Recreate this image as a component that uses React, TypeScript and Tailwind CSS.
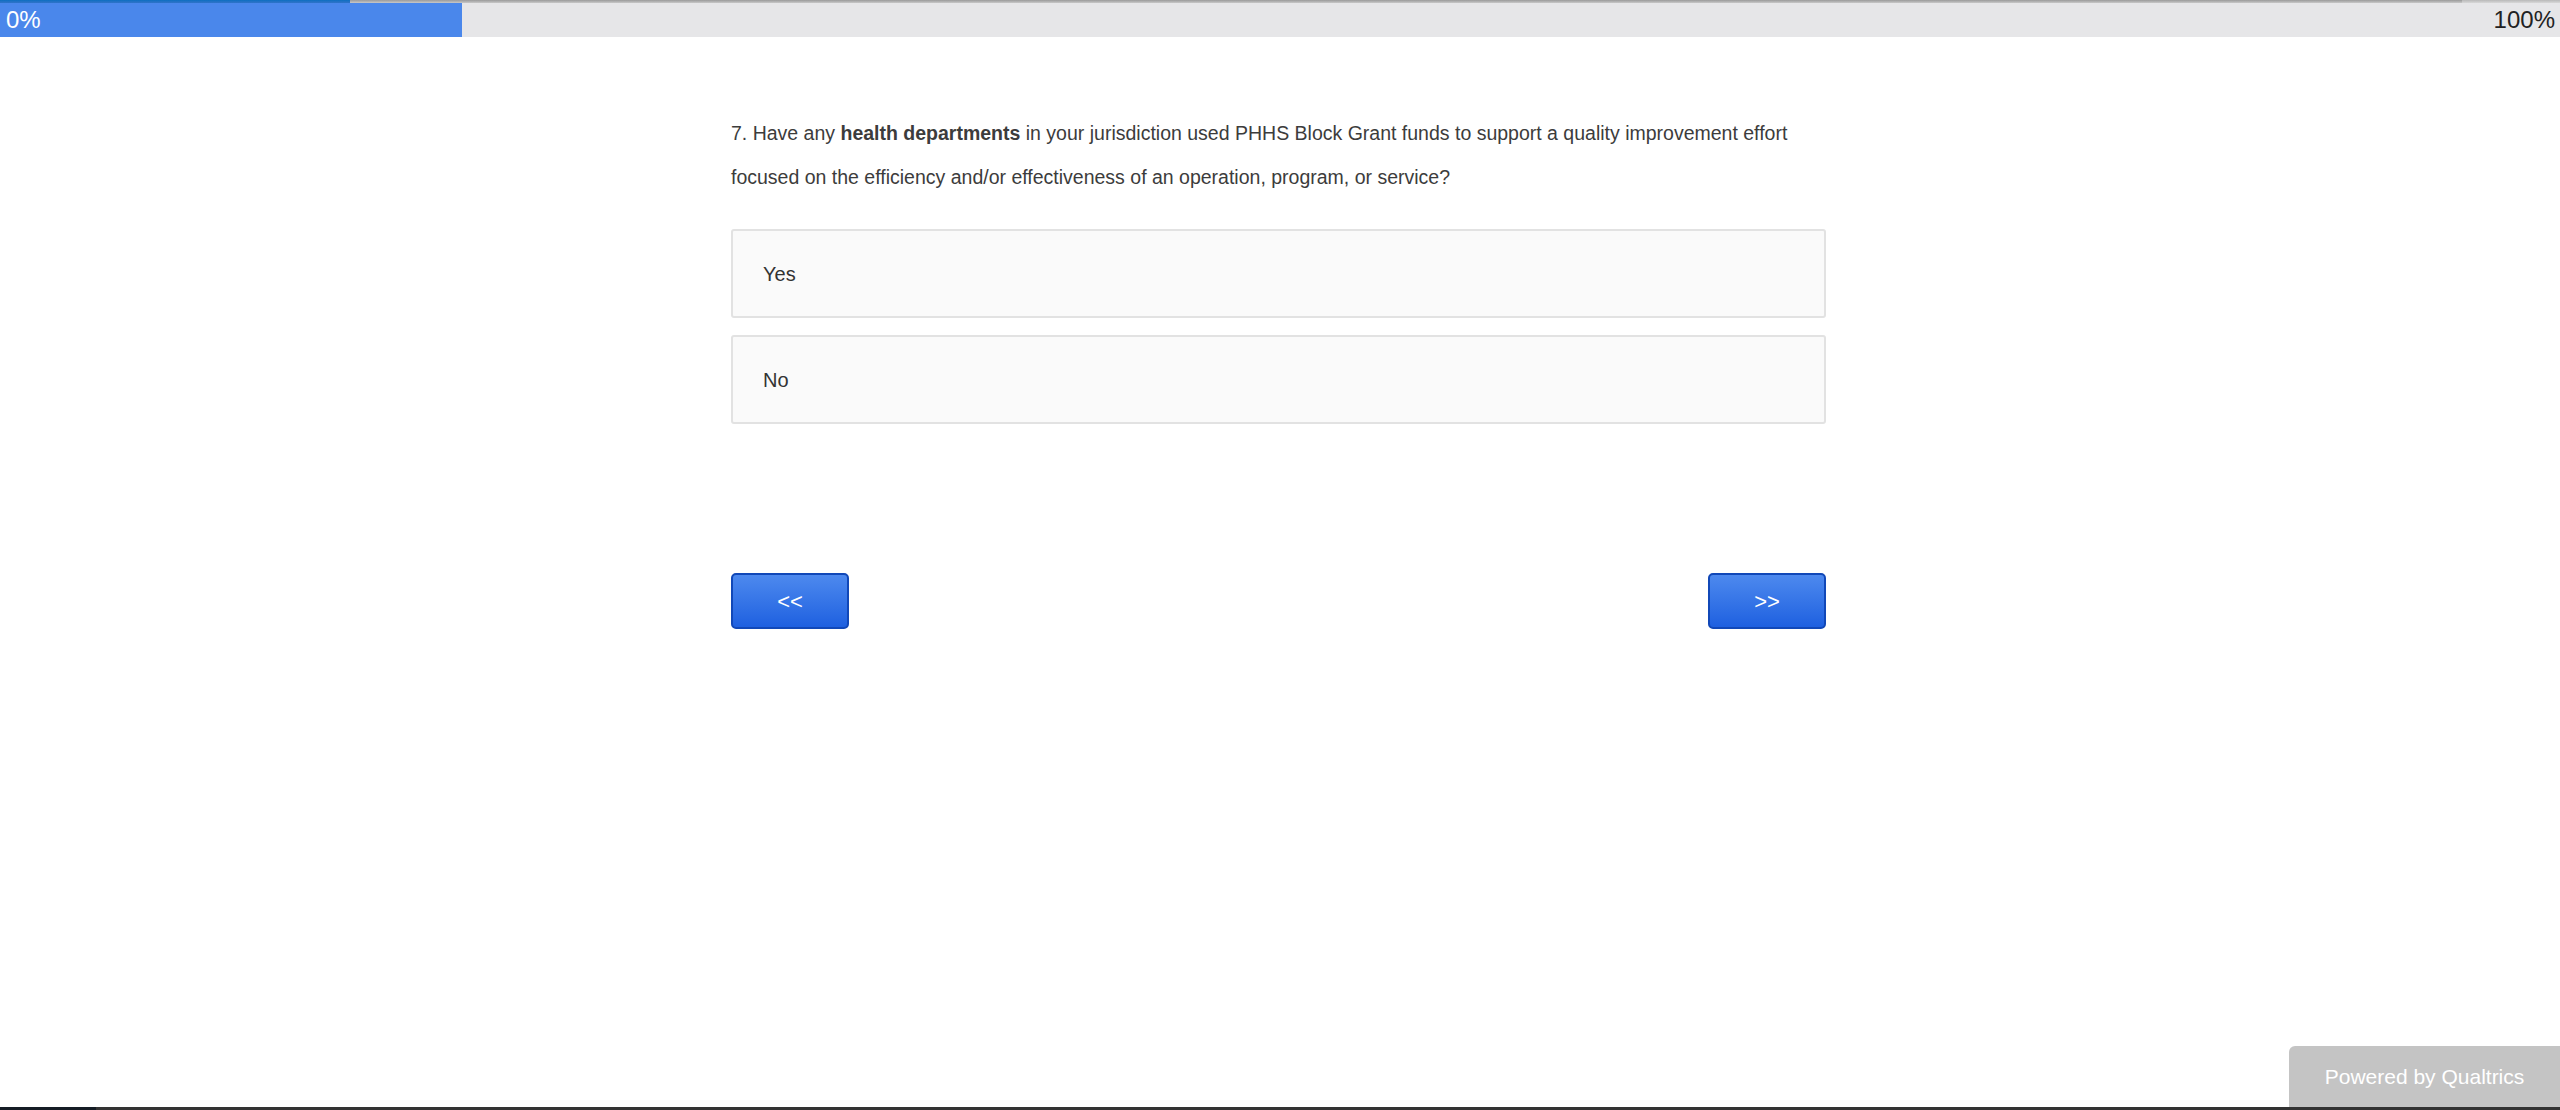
import React from "react";

export default function App() {
  return (
    <div className="relative flex h-[1110px] w-full flex-col overflow-hidden bg-white font-['Liberation_Sans',Arial,sans-serif]">
      {/* top strip */}
      <div className="flex h-[3px] w-full">
        <div className="h-full w-[350px] bg-gradient-to-b from-[#0a6fc0] to-[#2f73c9]" />
        <div className="h-full w-[2112px] bg-gradient-to-b from-[#9a9a9a] to-[#c8c8c8]" />
        <div className="h-full flex-1 bg-gradient-to-b from-[#b8b8b8] to-[#d8d8d8]" />
      </div>
      {/* progress bar */}
      <div className="relative flex h-[34px] w-full bg-[#e6e6e8]">
        <div className="h-full w-[462px] bg-[#4a87eb]" />
        <span className="absolute left-[6px] top-0 text-[24px] leading-[34px] text-white">0%</span>
        <span className="absolute right-[5px] top-0 text-[24px] leading-[34px] text-[#222]">100%</span>
      </div>

      {/* content */}
      <div className="flex justify-center pr-[3px]">
        <div className="flex w-[1095px] flex-col pt-[74px]">
          <div className="text-[19.5px] leading-[44px] text-[#3c3c3c]">
            7. Have any <b className="font-bold">health departments</b> in your jurisdiction used PHHS Block Grant funds to support a quality improvement effort focused on the efficiency and/or effectiveness of an operation, program, or service?
          </div>

          <div className="mt-[30px] flex flex-col gap-[17px]">
            {["Yes", "No"].map((t) => (
              <div
                key={t}
                className="flex h-[89px] items-center rounded-[3px] border-2 border-[#e2e2e2] bg-[#fafafa] pl-[30px] text-[20px] text-[#333]"
              >
                {t}
              </div>
            ))}
          </div>

          <div className="mt-[149px] flex justify-between">
            <button className="flex h-[56px] w-[118px] items-center justify-center rounded-[5px] border-2 border-[#1148b8] bg-gradient-to-b from-[#4d89ee] to-[#1e60e0] text-[22px] text-white">
              &lt;&lt;
            </button>
            <button className="flex h-[56px] w-[118px] items-center justify-center rounded-[5px] border-2 border-[#1148b8] bg-gradient-to-b from-[#4d89ee] to-[#1e60e0] text-[22px] text-white">
              &gt;&gt;
            </button>
          </div>
        </div>
      </div>

      <div className="flex-1" />
      {/* bottom strip */}
      <div className="flex h-[3px] w-full">
        <div className="h-full w-[96px] bg-[#151d25]" />
        <div className="h-full flex-1 bg-[#333333]" />
      </div>

      {/* Powered by badge */}
      <div className="absolute bottom-[3px] right-0 flex h-[61px] w-[271px] items-center justify-center rounded-tl-[6px] bg-[#c4c4c4] text-[21px] text-white">
        Powered by Qualtrics
      </div>
    </div>
  );
}
